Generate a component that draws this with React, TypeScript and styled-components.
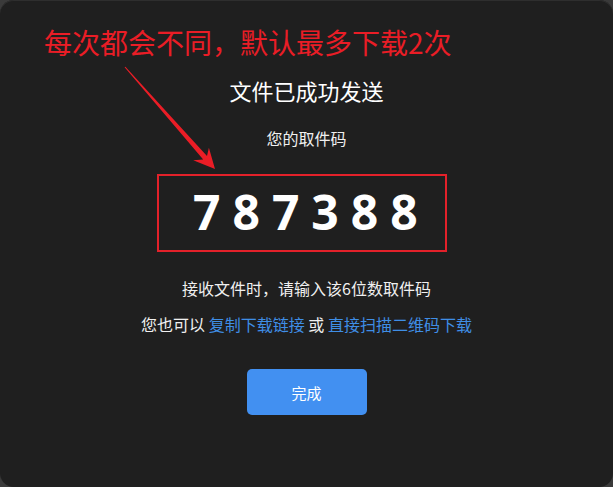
import styled, { createGlobalStyle } from "styled-components";

const GlobalStyle = createGlobalStyle`
  html, body {
    margin: 0;
    padding: 0;
    background: #3a3a3a;
  }
  body {
    font-family: "Noto Sans CJK SC", "Noto Sans", sans-serif;
  }
`;

const Card = styled.div`
  position: relative;
  box-sizing: border-box;
  width: 613px;
  height: 487px;
  padding-top: 74px;
  border-radius: 14px;
  background: #1f1f1f;
  box-shadow: inset 0 1px 0 #2e2e2e;
  display: flex;
  flex-direction: column;
  align-items: center;
  overflow: hidden;
`;

const Title = styled.h2`
  margin: 0;
  font-size: 22px;
  line-height: 32px;
  font-weight: 400;
  color: #ffffff;
`;

const Label = styled.p<{ $gap: number }>`
  margin: ${(p) => p.$gap}px 0 0;
  font-size: 16px;
  line-height: 22px;
  color: #f0f0f0;
`;

const CodeBox = styled.div`
  box-sizing: border-box;
  margin: 25px 0 0 -9px;
  width: 290px;
  height: 78px;
  border: 2px solid #e3212a;
  display: flex;
  align-items: center;
  padding-left: 34px;
`;

const Digits = styled.span`
  font-family: "Noto Sans", "Open Sans", sans-serif;
  font-size: 48px;
  font-weight: 700;
  line-height: 1;
  letter-spacing: 12px;
  color: #ffffff;
  margin-top: -2px;
`;

const Link = styled.a`
  color: #3f8ee6;
  text-decoration: none;
  cursor: pointer;
`;

const DoneButton = styled.button`
  margin-top: 34px;
  width: 120px;
  height: 46px;
  border: none;
  border-radius: 5px;
  background: #4290f1;
  color: #ffffff;
  font-family: "Noto Sans CJK SC", sans-serif;
  font-size: 15px;
  cursor: pointer;
`;

const Annotation = styled.div`
  position: absolute;
  inset: 0;
  pointer-events: none;
`;

const Note = styled.div`
  position: absolute;
  left: 44px;
  top: 25px;
  font-size: 28px;
  line-height: 34px;
  color: #ea1d26;
  white-space: nowrap;
`;

const Arrow = styled.svg`
  position: absolute;
  left: 0;
  top: 0;
`;

export default function App() {
  return (
    <>
      <GlobalStyle />
      <Card>
        <Title>文件已成功发送</Title>
        <Label $gap={21}>您的取件码</Label>
        <CodeBox>
          <Digits>787388</Digits>
        </CodeBox>
        <Label $gap={25}>接收文件时，请输入该6位数取件码</Label>
        <Label $gap={14}>
          您也可以&nbsp;<Link>复制下载链接</Link>&nbsp;或&nbsp;<Link>直接扫描二维码下载</Link>
        </Label>
        <DoneButton>完成</DoneButton>
        <Annotation>
          <Note>每次都会不同，默认最多下载2次</Note>
          <Arrow width="613" height="487" viewBox="0 0 613 487">
            <polygon
              fill="#ea1d26"
              points="124.6,67.3 203.2,159.4 193.2,160.2 215,169 208.9,147.7 207,156.1 125.4,66.7"
            />
          </Arrow>
        </Annotation>
      </Card>
    </>
  );
}
